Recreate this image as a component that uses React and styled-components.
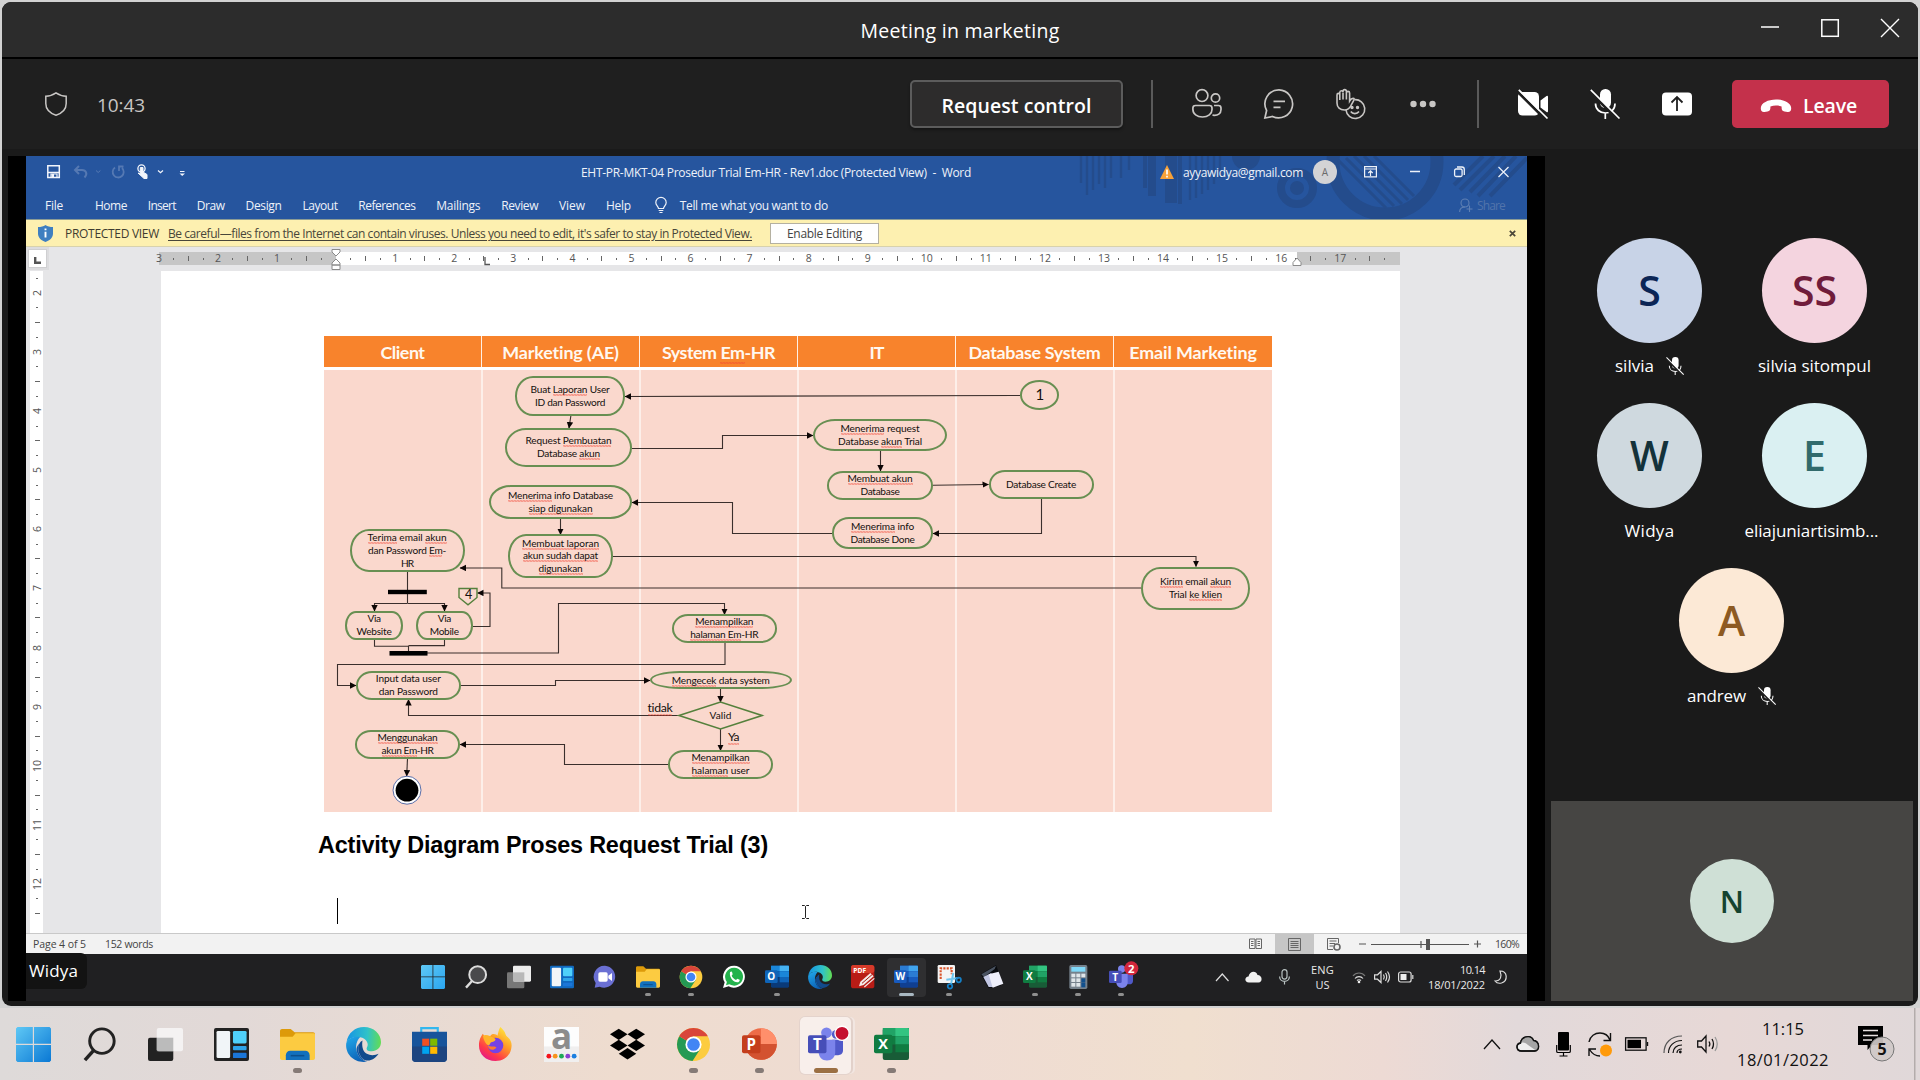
import React, { useLayoutEffect, useRef, useState } from "react";
import styled, { createGlobalStyle } from "styled-components";

const ui = `"Open Sans", "Noto Sans", sans-serif`;
const calibri = `Lato, "Open Sans", sans-serif`;

const GlobalStyle = createGlobalStyle`
  * { box-sizing: border-box; }
  body { margin: 0; background: #cfcfcf; font-family: ${ui}; overflow: hidden; }
  svg { display: block; flex: none; overflow: visible; }
`;

/* ---------- tracked text ---------- */

const FitBox = styled.span`
  display: inline-block;
  flex: none;
  white-space: pre;
  width: ${(p) => p.$w}px;
  text-decoration: inherit;
`;

function Fit({ w, children, className }) {
  const ref = useRef(null);
  const [gap, setGap] = useState(0);
  useLayoutEffect(() => {
    const el = ref.current;
    const n = el.textContent.length;
    setGap((w - el.getBoundingClientRect().width) / n);
  }, [w]);
  return (
    <FitBox $w={w} className={className}>
      <span ref={ref} style={{ letterSpacing: gap }}>
        {children}
      </span>
    </FitBox>
  );
}

/* ---------- page and Teams window ---------- */

const Desktop = styled.div`
  width: 1920px;
  height: 1080px;
  display: flex;
  flex-direction: column;
  padding-top: 2px;
  background: #d2d2d2;
`;

const TeamsWindow = styled.div`
  width: 1916px;
  height: 1004px;
  margin-left: 2px;
  flex: none;
  border-radius: 9px;
  overflow: hidden;
  background: #1a1a1a;
  display: flex;
  flex-direction: column;
`;

const TitleBar = styled.header`
  height: 57px;
  border-bottom: 2px solid #000;
  background: #2c2c2c;
  display: grid;
  grid-template-columns: 1fr 199px 1fr;
  color: #fff;
  font-size: 19.5px;
  line-height: 57px;
`;

const WindowControls = styled.div`
  grid-column: 3;
  display: flex;
  justify-content: flex-end;
  gap: 42px;
  padding: 17px 19px 0 0;
`;

const MeetingBar = styled.div`
  height: 90px;
  background: #1f1f1f;
  display: flex;
  align-items: center;
  padding: 0 29px 0 43px;
`;

const Clock = styled.div`
  margin-left: 30px;
  padding-top: 2px;
  color: #c8c6c4;
  font-size: 19px;
  flex: 1;
`;

const RequestButton = styled.button`
  width: 213px;
  height: 48px;
  border: 2px solid #5c5c5c;
  border-radius: 5px;
  background: #2d2c2c;
  color: #fff;
  font: 600 19.5px ${ui};
  padding: 3px 0 0;
  box-shadow: 0 2px 3px rgba(0, 0, 0, 0.35);
`;

const Divider = styled.div`
  width: 2px;
  height: 48px;
  background: #5a5a5a;
  margin: 0 ${(p) => p.$r}px 0 ${(p) => p.$l}px;
`;

const ToolIcons = styled.div`
  display: flex;
  align-items: center;
  gap: 42px;
`;

const LeaveButton = styled.button`
  width: 157px;
  height: 48px;
  margin-left: 40px;
  border: 0;
  border-radius: 5px;
  background: #c4314b;
  color: #fff;
  font: 600 19.5px ${ui};
  display: flex;
  align-items: center;
  padding: 3px 0 0 28px;
  gap: 11px;
`;

const Stage = styled.div`
  flex: 1;
  display: flex;
  padding: 7px 0 5px 6px;
`;

const ShareFrame = styled.div`
  width: 1537px;
  height: 845px;
  background: #000;
  padding: 0 18px;
  flex: none;
`;

/* ---------- Word ---------- */

const Word = styled.div`
  width: 1501px;
  height: 845px;
  display: flex;
  flex-direction: column;
  background: #e6e6e8;
  position: relative;
`;

const WordTop = styled.div`
  height: 63px;
  background: #26559e;
  color: #eef2f9;
  position: relative;
  overflow: hidden;
  font-size: 12px;
  flex: none;
`;

const Pattern = styled.svg`
  position: absolute;
  right: 0;
  top: 0;
`;

const WordCaption = styled.div`
  position: relative;
  height: 32px;
  display: flex;
  align-items: center;
  padding-left: 21px;
`;

const QuickAccess = styled.div`
  width: 534px;
  display: flex;
`;

const Account = styled.div`
  display: flex;
  align-items: center;
  margin-left: 189px;
  gap: 9px;
`;

const MiniAvatar = styled.div`
  width: 24px;
  height: 24px;
  border-radius: 50%;
  background: #d3d3d5;
  color: #6b6b6b;
  font-size: 10px;
  line-height: 24px;
  text-align: center;
  margin-left: 1px;
`;

const WordControls = styled.div`
  display: flex;
  align-items: center;
  margin-left: 27px;
  gap: 33.4px;
`;

const Tabs = styled.div`
  position: relative;
  height: 31px;
  display: flex;
  align-items: center;
  padding: 3px 0 0 19px;
  gap: 20.9px;
`;

const FirstTab = styled.span`
  margin-right: 11px;
`;

const TellMe = styled.span`
  display: flex;
  align-items: center;
  gap: 13px;
  margin-left: 3px;
`;

const ShareLink = styled.span`
  margin-left: auto;
  margin-right: 22px;
  display: flex;
  align-items: center;
  gap: 4px;
  color: #5274ab;
`;

const ProtectedBar = styled.div`
  height: 28px;
  flex: none;
  background: #fdf0b0;
  border-top: 1px solid #8c9c94;
  border-bottom: 1px solid #d8d2ad;
  display: flex;
  align-items: center;
  padding: 1px 11px 0 12px;
  font-size: 12px;
  color: #3f3c30;
`;

const Notice = styled.span`
  margin-left: 9px;
  text-decoration: underline;
  text-underline-offset: 2px;
  color: #48463a;
`;

const EnableButton = styled.button`
  margin-left: 18px;
  width: 109px;
  height: 21px;
  border: 1px solid #b4b0a0;
  background: #fefefe;
  color: #444;
  font: 12px ${ui};
  padding: 0;
`;

const CloseMark = styled.span`
  margin-left: auto;
  height: 8px;
`;

const RulerRow = styled.div`
  height: 24px;
  flex: none;
  display: flex;
  padding-left: 2px;
`;

const TabStop = styled.div`
  width: 19px;
  height: 19px;
  margin-top: 2px;
  background: #fff;
  border: 1px solid #cfcfd1;
  box-shadow: 0 0 0 2px #dcdcde;
  padding: 7px 0 0 5px;
`;

const Ruler = styled.div`
  position: relative;
  width: 1241px;
  height: 13px;
  margin: 5px 0 0 112px;
  display: flex;
  background: linear-gradient(90deg, #c6c6c6 177px, #fff 177px, #fff 1138px, #c6c6c6 1138px);
`;

const Marks = styled.div`
  display: flex;
  margin-left: -7.4px;
`;

const Mark = styled.span`
  width: 14.775px;
  height: 13px;
  flex: none;
  font-size: 10.5px;
  line-height: 13px;
  text-align: center;
  color: #555;
  white-space: nowrap;
  display: flex;
  justify-content: center;
  align-items: center;
`;

const Tick = styled.i`
  width: 1px;
  height: ${(p) => (p.$long ? 5 : 2)}px;
  background: #666;
`;

const Marker = styled.svg`
  position: absolute;
  left: ${(p) => p.$x}px;
  top: ${(p) => p.$y}px;
`;

const DocArea = styled.div`
  flex: 1;
  min-height: 0;
  display: flex;
`;

const SideRuler = styled.div`
  width: 13px;
  margin-left: 4px;
  padding-left: 1px;
  background: #fff;
`;

const SideMarks = styled.div`
  display: flex;
  flex-direction: column;
`;

const SideMark = styled.span`
  height: 14.775px;
  flex: none;
  display: flex;
  align-items: center;
  justify-content: center;
  font-size: 10.5px;
  color: #555;
`;

const Turned = styled.span`
  writing-mode: vertical-rl;
  transform: rotate(180deg);
  line-height: 12px;
`;

const SideTick = styled.i`
  height: 1px;
  width: ${(p) => (p.$long ? 5 : 2)}px;
  background: #666;
`;

const Page = styled.div`
  width: 1239px;
  margin-left: 118px;
  background: #fff;
  padding: 65px 0 0 157px;
  position: relative;
`;

const Heading = styled.h2`
  margin: 16px 0 0;
  font: 700 23.4px/35px "Liberation Sans", Arial, sans-serif;
  color: #000;
`;

const Caret = styled.div`
  width: 1px;
  height: 26px;
  margin: 35px 0 0 19px;
  background: #000;
`;

const Pointer = styled.svg`
  position: absolute;
  left: 640px;
  top: 634px;
`;

const StatusBar = styled.div`
  height: 21px;
  flex: none;
  background: #f2f2f2;
  border-top: 1px solid #c9c9c9;
  display: flex;
  align-items: center;
  padding: 0 8px 0 7px;
  font-size: 10.5px;
  color: #444;
`;

const WordCount = styled.span`
  margin-left: 19px;
`;

const ViewButtons = styled.div`
  margin-left: auto;
  display: flex;
  height: 20px;
`;

const ViewButton = styled.div`
  width: 39px;
  display: flex;
  align-items: center;
  justify-content: center;
  background: ${(p) => (p.$on ? "#c6c6c6" : "transparent")};
`;

const Zoom = styled.div`
  display: flex;
  align-items: center;
  margin-left: 6px;
  gap: 14px;
`;

/* ---------- swim-lane diagram ---------- */

const Lanes = styled.div`
  position: relative;
  width: 948px;
  height: 476px;
  margin-left: 6px;
  display: grid;
  grid-template-columns: 157px repeat(4, 158px) 159px;
  grid-template-rows: 31px 442px;
  row-gap: 3px;
  background: #fff;
`;

const LaneHead = styled.div`
  background: #f8832c;
  color: #fff8f0;
  font: 700 17.9px/32px ${calibri};
  text-align: center;
  border-left: ${(p) => (p.$first ? 0 : 1)}px solid #fff0e6;
`;

const LaneBody = styled.div`
  background: #fad8cd;
  border-left: ${(p) => (p.$first ? 0 : 2)}px solid #fdefe9;
`;

const Layer = styled.svg`
  position: absolute;
  left: 0;
  top: 0;
`;

const Node = styled.div`
  position: absolute;
  left: ${(p) => p.$x - 324}px;
  top: ${(p) => p.$y - 336}px;
  width: ${(p) => p.$w}px;
  height: ${(p) => p.$h}px;
  border: ${(p) => (p.$bare ? 0 : 2)}px solid #688f52;
  border-radius: ${(p) => p.$r}px / 50%;
  display: flex;
  flex-direction: column;
  align-items: center;
  justify-content: center;
  font: ${(p) => p.$size || 10.1}px/12.8px ${calibri};
  color: #14100e;
`;

const Flag = styled.span`
  padding-bottom: 1px;
  background: url("data:image/svg+xml,%3Csvg xmlns='http://www.w3.org/2000/svg' width='3' height='2'%3E%3Cpath d='M0 1.6L.75.4 2.25 1.6 3 .4' fill='none' stroke='%23f0402f' stroke-width='.7'/%3E%3C/svg%3E") repeat-x left bottom;
`;

const lanes = [
  ["Client", 44],
  ["Marketing (AE)", 117],
  ["System *Em*-HR", 113],
  ["IT", 14],
  ["Database System", 132],
  ["Email Marketing", 128],
];

const nodes = [
  { x: 515, y: 376, w: 110, h: 39.5, r: 18, t: [["Buat *Laporan* User", 79], ["ID dan Password", 70]] },
  { x: 505, y: 428, w: 127, h: 38.5, r: 21, t: [["Request *Pembuatan*", 86], ["Database *akun*", 63]] },
  { x: 489, y: 484.5, w: 143, h: 34.5, r: 22, t: [["*Menerima* info Database", 105], ["*siap digunakan*", 64]] },
  { x: 349.5, y: 529, w: 115, h: 43, r: 19, t: [["*Terima* email *akun*", 79], ["dan Password *Em*-", 78], ["HR", 12]] },
  { x: 508, y: 534, w: 105, h: 43.5, r: 18, t: [["*Membuat laporan*", 77], ["*akun sudah dapat*", 75], ["*digunakan*", 44]] },
  { x: 345, y: 611, w: 58, h: 28.5, r: 11, t: [["Via", 13], ["Website", 35]] },
  { x: 415.5, y: 611, w: 57.5, h: 28.5, r: 11, t: [["Via", 13], ["Mobile", 29]] },
  { x: 671.5, y: 614, w: 105.5, h: 28.5, r: 16, t: [["*Menampilkan*", 58], ["*halaman Em*-HR", 68]] },
  { x: 355.5, y: 671, w: 105.5, h: 28.5, r: 16, t: [["Input data user", 65], ["dan Password", 59]] },
  { x: 649.5, y: 671, w: 142.5, h: 18, r: 30, t: [["*Mengecek* data system", 98]] },
  { x: 668, y: 750, w: 105, h: 28.5, r: 16, t: [["*Menampilkan*", 58], ["*halaman* user", 58]] },
  { x: 355, y: 730, w: 105, h: 28.5, r: 16, t: [["*Menggunakan*", 60], ["*akun Em*-HR", 52]] },
  { x: 1020, y: 380, w: 39, h: 29.5, r: 19.5, size: 15, t: [["1", 8]] },
  { x: 813, y: 418.5, w: 134, h: 32, r: 22, t: [["*Menerima* request", 79], ["Database *akun* Trial", 84]] },
  { x: 827, y: 471, w: 106, h: 28.5, r: 16, t: [["*Membuat akun*", 65], ["Database", 39]] },
  { x: 988.5, y: 470, w: 105, h: 28.5, r: 16, t: [["Database Create", 70]] },
  { x: 832, y: 517, w: 101, h: 31.5, r: 17, t: [["*Menerima* info", 63], ["Database Done", 64]] },
  { x: 1141, y: 566.5, w: 109, h: 43, r: 19, t: [["*Kirim* email *akun*", 71], ["Trial *ke klien*", 53]] },
  { x: 700, y: 709, w: 41, h: 13, bare: true, t: [["Valid", 22]] },
  { x: 645, y: 701, w: 30, h: 15, bare: true, size: 12.3, t: [["*tidak*", 25]] },
  { x: 722, y: 730, w: 23, h: 15, bare: true, size: 12, t: [["*Ya*", 11]] },
  { x: 459, y: 588, w: 19, h: 15, bare: true, size: 12.5, t: [["4", 7]] },
];

const links = [
  "1020,395.5 625,396.5",
  "571,415 569,428",
  "632,448.5 722.5,448.5 722.5,435.5 813,435.5",
  "880.5,450 880.5,471",
  "933,485.3 988.5,484.5",
  "1041.5,498 1041.5,533.5 933,533.5",
  "832,533.5 732.5,533.5 732.5,502.5 632,502.5",
  "560.5,519 560.5,534.5",
  "613,556.5 1196,556.5 1196,566.5",
  "1141,588 501.8,588 501.8,568 460,568",
  "407.5,603.5 374.5,603.5 374.5,611",
  "407.5,603.5 444.5,603.5 444.5,611",
  "473,626.5 490,626.5 490,593 477.5,593",
  "427,653 558.5,653 558.5,603.5 724.5,603.5 724.5,614.5",
  "725,642.5 725,664.5 337.5,664.5 337.5,685.5 356,685.5",
  "461,685.5 555.5,685.5 555.5,680.5 650,680.5",
  "720.5,689 720.5,702",
  "678,715.5 408.5,715.5 408.5,699.5",
  "720.5,729 720.5,750.5",
  "668,764.5 564.5,764.5 564.5,744.5 460,744.5",
  "407.5,758.5 406.7,776",
];

function Flagged({ text }) {
  return text.split("*").map((part, i) => (i % 2 ? <Flag key={i}>{part}</Flag> : part));
}

function Diagram() {
  return (
    <Lanes>
      {lanes.map(([name, w], i) => (
        <LaneHead key={name} $first={i === 0}>
          <Fit w={w}>
            <Flagged text={name} />
          </Fit>
        </LaneHead>
      ))}
      {lanes.map(([name], i) => (
        <LaneBody key={name} $first={i === 0} />
      ))}
      <Layer width="948" height="476" viewBox="324 336 948 476" fill="none">
        <defs>
          <marker id="tip" markerWidth="7" markerHeight="7" refX="6" refY="3.2" orient="auto" markerUnits="userSpaceOnUse">
            <path d="M0 0L6.4 3.2L0 6.4z" fill="#0c0605" />
          </marker>
        </defs>
        {links.map((points) => (
          <polyline key={points} points={points} stroke="#3a2f2c" strokeWidth="1.1" markerEnd="url(#tip)" />
        ))}
        <path d="M407.5 572V603M374.5 639V646.3H408.5V652M444.5 639V645.6H408.5" stroke="#3a2f2c" strokeWidth="1.1" />
        <rect x="388" y="589.8" width="38.8" height="4.4" fill="#000" />
        <rect x="389.5" y="651" width="38" height="4.6" fill="#000" />
        <path d="M459 588.5H477V597.5L468 604.8L459 597.5Z" stroke="#55803c" strokeWidth="1.4" />
        <path d="M679 715.5L720.5 702L762 715.5L720.5 729Z" stroke="#55803c" strokeWidth="1.6" />
        <circle cx="407" cy="790.2" r="14" fill="#fff" stroke="#5a6ea8" strokeWidth="1" />
        <circle cx="407" cy="790.2" r="11.4" fill="#000" />
      </Layer>
      {nodes.map((n, i) => (
        <Node key={i} $x={n.x} $y={n.y} $w={n.w} $h={n.h} $r={n.r || 0} $bare={n.bare} $size={n.size}>
          {n.t.map(([text, w], j) => (
            <Fit key={j} w={w}>
              <Flagged text={text} />
            </Fit>
          ))}
        </Node>
      ))}
    </Lanes>
  );
}

/* ---------- shared screen task bar ---------- */

const InnerTaskbar = styled.div`
  height: 47px;
  flex: none;
  background: #202022;
  display: flex;
  position: relative;
  color: #e9e9e9;
`;

const NameTag = styled.div`
  position: absolute;
  left: 0;
  top: -1px;
  width: 61px;
  height: 36px;
  border-radius: 0 6px 6px 0;
  background: #131313;
  color: #fff;
  font-size: 17px;
  line-height: 36px;
  padding-left: 3px;
`;

const InnerApps = styled.div`
  display: flex;
  margin-left: 385px;
  width: 804px;
`;

const InnerApp = styled.div`
  width: 39px;
  height: 39px;
  margin: 4px 4.05px 0 0;
  flex: none;
  border-radius: 4px;
  background: ${(p) => (p.$state === "open" ? "#2f2f31" : "transparent")};
  display: flex;
  flex-direction: column;
  align-items: center;
  padding-top: 7px;
  gap: 4px;
`;

const Dot = styled.i`
  width: ${(p) => (p.$state === "open" ? 15 : 6)}px;
  height: 3px;
  border-radius: 2px;
  background: ${(p) => (p.$state === "open" ? "#a9b8c2" : p.$state ? "#8f8f8f" : "transparent")};
`;

const InnerTray = styled.div`
  display: flex;
  align-items: center;
  font-size: 11px;
  line-height: 15.4px;
  padding-bottom: 1px;
`;

const Stack = styled.div`
  display: flex;
  flex-direction: column;
  align-items: ${(p) => p.$align || "center"};
  margin: 0 ${(p) => p.$r || 0}px 0 ${(p) => p.$l || 0}px;
`;

const Space = styled.i`
  width: ${(p) => p.$w}px;
  flex: none;
`;

/* ---------- participants ---------- */

const Side = styled.aside`
  flex: 1;
  display: flex;
  flex-direction: column;
  padding: 82px 5px 0 6px;
`;

const People = styled.div`
  display: grid;
  grid-template-columns: 165px 165px;
  justify-content: start;
  padding-left: 16px;
  height: 563px;
  grid-auto-rows: 165px;
`;

const Person = styled.div`
  display: flex;
  flex-direction: column;
  align-items: center;
  ${(p) => p.$wide && "grid-column: 1 / 3; margin-right: 1px;"}
`;

const Avatar = styled.div`
  width: ${(p) => p.$d || 105}px;
  height: ${(p) => p.$d || 105}px;
  border-radius: 50%;
  background: ${(p) => p.$bg};
  color: ${(p) => p.$fg};
  font-size: ${(p) => p.$size || 41}px;
  font-weight: 600;
  display: flex;
  align-items: center;
  justify-content: center;
  padding-bottom: ${(p) => p.$lift ?? 2}px;
`;

const PersonName = styled.div`
  margin: 11px ${(p) => p.$shift || 0}px 0 0;
  height: 24px;
  display: flex;
  align-items: center;
  gap: 12px;
  color: #fff;
  font-size: 17px;
  line-height: 24px;
`;

const SelfView = styled.div`
  height: 200px;
  background: #464543;
  display: flex;
  align-items: center;
  justify-content: center;
`;

const people = [
  { id: "S", name: "silvia", w: 39, bg: "#c8d3e7", fg: "#0b2556", muted: true },
  { id: "SS", name: "silvia sitompul", w: 113, bg: "#f4d4df", fg: "#701c3b" },
  { id: "W", name: "Widya", w: 50, bg: "#cfd9df", fg: "#14323a" },
  { id: "E", name: "eliajuniartisimb...", w: 134, bg: "#daf0f2", fg: "#316a6c", shift: 6 },
  { id: "A", name: "andrew", w: 59, bg: "#fce9d6", fg: "#8d5a22", muted: true, wide: true },
];

/* ---------- outer task bar ---------- */

const Taskbar = styled.footer`
  flex: 1;
  margin-top: 2px;
  display: flex;
  background: linear-gradient(90deg, #dedad9 0%, #e2d9d7 12%, #eedccf 32%, #efdcd3 50%, #f0dfcf 62%, #eddad4 72%, #e2d9da 79%, #e7d8d6 90%, #e0d8d9 100%);
`;

const Apps = styled.div`
  display: flex;
  padding: 9px 0 0 8px;
  width: 1483px;
`;

const TaskButton = styled.div`
  width: 51px;
  height: 57px;
  margin-right: 15px;
  flex: none;
  border-radius: 5px;
  display: flex;
  flex-direction: column;
  align-items: center;
  padding-top: 10px;
  gap: 6px;
  background: ${(p) => (p.$state === "open" ? "#f8efeb" : "transparent")};
  box-shadow: ${(p) => (p.$state === "open" ? "2px 0 0 #e2d1ca, 4px 0 0 #f2e6e1, 0 0 0 1px #e4d3cc" : "none")};
`;

const AppDot = styled.i`
  width: ${(p) => (p.$state === "open" ? 24 : 9)}px;
  height: 5px;
  border-radius: 3px;
  background: ${(p) => (p.$state === "open" ? "#9b6f43" : p.$state ? "#857a76" : "transparent")};
`;

const Tray = styled.div`
  display: flex;
  align-items: center;
  height: 72px;
`;

const DateTime = styled.div`
  width: 92px;
  margin-left: 18px;
  display: flex;
  flex-direction: column;
  align-items: center;
  font-size: 16.5px;
  line-height: 31.5px;
  color: #111;
`;

/* ---------- icons ---------- */

const MicOff = ({ s = 30 }) => (
  <svg width={s} height={s} viewBox="0 0 30 30" fill="none" stroke="#fff" strokeWidth="1.7">
    <rect x="10" y="0" width="11" height="19" rx="5.3" fill="#fff" stroke="none" />
    <path d="M5.5 14.5C5.5 20.5 10 24 15.5 24S25 20.5 25 14.5M15.3 24V30" />
    <path d="M0 2.5L28 31" stroke="#1f1f1f" strokeWidth="3" />
    <path d="M.8 .8L29.5 29.5" />
  </svg>
);

const WinLogo = ({ s, a = "#5fc8f5", b = "#0a78d4" }) => (
  <svg width={s} height={s} viewBox="0 0 36 36">
    <defs>
      <linearGradient id={"wl" + s} x1="0" y1="0" x2="36" y2="36" gradientUnits="userSpaceOnUse">
        <stop stopColor={a} />
        <stop offset="1" stopColor={b} />
      </linearGradient>
    </defs>
    <path d="M1.5 0H17.3V17.3H0V1.5zM18.5 0H34.5L36 1.5V17.3H18.5zM0 18.5H17.3V36H1.5L0 34.5zM18.5 18.5H36V34.5L34.5 36H18.5z" fill={`url(#wl${s})`} />
  </svg>
);

const SearchIcon = ({ s, c, f }) => (
  <svg width={s} height={s} viewBox="0 0 36 36" fill="none" stroke={c}>
    <circle cx="20.5" cy="14.5" r="12.6" strokeWidth="3" fill={f} />
    <path d="M12 24L3 34" strokeWidth="3.6" />
  </svg>
);

const TaskView = ({ s, back, front }) => (
  <svg width={s} height={s} viewBox="0 0 36 36">
    <rect x="0" y="11" width="26" height="24" rx="2" fill={back} />
    <rect x="9" y="1" width="27" height="24" rx="2" fill={front} />
    <path d="M9 11H26V25H9z" fill="#9d9d9d" opacity=".65" />
  </svg>
);

const Widgets = ({ s, edge }) => (
  <svg width={s} height={s} viewBox="0 0 36 36">
    <rect y="1" width="36" height="34" rx="2" fill={edge} />
    <rect x="2.6" y="4" width="14" height="28" rx="1.5" fill="#f1f5f8" />
    <rect x="19.5" y="4" width="14" height="13" rx="1.5" fill="#4fd0fa" />
    <rect x="19.5" y="19.5" width="14" height="4.5" rx="1" fill="#2ea4ea" />
    <rect x="19.5" y="26.5" width="14" height="5.5" rx="1" fill="#1b76d8" />
  </svg>
);

const Folder = ({ s }) => (
  <svg width={s} height={s} viewBox="0 0 36 36">
    <path d="M0 4C0 3 1 2 2 2H11L15 5.5H34C35.2 5.5 36 6.4 36 7.5V12H0z" fill="#dd9a0a" />
    <path d="M0 10H13L16 6.5H34.5C35.4 6.5 36 7 36 8V32C36 33.2 35.2 34 34 34H2C.8 34 0 33.2 0 32z" fill="#fccb41" />
    <path d="M6 34V29C6 26.5 8 24.5 10.5 24.5H26C28.5 24.5 30.5 26.5 30.5 29V34z" fill="#1270bd" />
    <path d="M11 29.5H25" stroke="#0b4f8d" strokeWidth="1.6" />
  </svg>
);

const Edge = ({ s }) => (
  <svg width={s} height={s} viewBox="0 0 36 36">
    <defs>
      <linearGradient id={"ea" + s} x1="4" y1="10" x2="36" y2="12" gradientUnits="userSpaceOnUse">
        <stop stopColor="#1a9be0" />
        <stop offset=".55" stopColor="#2fc2c9" />
        <stop offset="1" stopColor="#62dc55" />
      </linearGradient>
      <linearGradient id={"eb" + s} x1="2" y1="12" x2="14" y2="36" gradientUnits="userSpaceOnUse">
        <stop stopColor="#1fa3e6" />
        <stop offset="1" stopColor="#0c5fb4" />
      </linearGradient>
    </defs>
    <path d="M0.5 16C2 6 9.5 0 18.5 0C28.5 0 36 7 36 15.5C36 21.5 31.5 25 26.5 25C22 25 20.5 23 21.5 21C24 17.5 21 11.5 14.5 10.5C8 9.5 2.5 12 .5 16z" fill={`url(#ea${s})`} />
    <path d="M.2 17C1.5 11.5 9 9 14.5 10.5C11 14 9.5 19 11 25C12.5 31 17 35.5 22 35.6C10 38 -1 29 .2 17z" fill={`url(#eb${s})`} />
    <path d="M17 14C11 17 11.5 26 16 31.5C21 37 29 34.5 33.5 27.5C29 29.8 20 30 17.5 23C16.5 20 16.5 16.5 17 14z" fill="#114a8c" />
    <path d="M11 25C12.5 31 17 35.5 22 35.6C20 35 17.5 33.5 16 31.5C12.5 27 11.5 21 14 17C11.5 19 10.3 22 11 25z" fill="#0f58a6" />
  </svg>
);

const Chrome = ({ s }) => (
  <svg width={s} height={s} viewBox="0 0 36 36">
    <circle cx="18" cy="18" r="17" fill="#fccc3f" />
    <path d="M18 18L3.3 9.5A17 17 0 0 0 17 35L25.3 22z" fill="#249a54" />
    <path d="M3.3 9.5A17 17 0 0 1 32.7 9.5H18L10.5 14z" fill="#d9453a" />
    <circle cx="18" cy="18" r="8.3" fill="#fff" />
    <circle cx="18" cy="18" r="6.5" fill="#4285f4" />
  </svg>
);

const Letter = styled.text`
  font: 700 ${(p) => p.$size}px ${ui};
  fill: ${(p) => p.$fill || "#fff"};
  text-anchor: middle;
`;

const Office = ({ s, kind }) => {
  const c = {
    X: ["#185c37", "#107c41", "#21a366", "#33c481"],
    W: ["#103f91", "#185abd", "#2b7cd3", "#41a5ee"],
    O: ["#0a3a78", "#0f64b8", "#1a86d9", "#45b2f2"],
  }[kind];
  return (
    <svg width={s} height={s} viewBox="0 0 36 36">
      <rect x="9" y="1" width="27" height="33" rx="2" fill={c[0]} />
      <path d="M9 1H36V9.5H9z" fill={c[2]} />
      <path d="M22 1H34Q36 1 36 3V9.5H22z" fill={c[3]} />
      <path d="M9 9.5H36V18H9z" fill={c[1]} />
      <path d="M22 9.5H36V18H22z" fill={c[2]} />
      <path d="M22 18H36V26H22z" fill={c[1]} />
      <rect y="8" width="19" height="19" rx="2" fill={kind === "X" ? "#107c41" : c[1]} />
      <Letter x="9.5" y="23" $size="15">
        {kind}
      </Letter>
    </svg>
  );
};

const PowerPoint = ({ s }) => (
  <svg width={s} height={s} viewBox="0 0 36 36">
    <circle cx="19.5" cy="17.5" r="16.3" fill="#ed6c47" />
    <path d="M19.5 1.2A16.3 16.3 0 0 1 35.8 17.5H19.5z" fill="#ff8f6b" />
    <path d="M3.2 17.5A16.3 16.3 0 0 0 35.8 17.5z" fill="#d35230" />
    <rect y="8.5" width="19" height="18.5" rx="2" fill="#c43e1c" />
    <Letter x="9.5" y="23.3" $size="15.5">
      P
    </Letter>
  </svg>
);

const Teams = ({ s, badge }) => (
  <svg width={s} height={s} viewBox="0 0 36 36">
    <circle cx="29" cy="7.5" r="4.5" fill="#5059c9" />
    <path d="M25 13H36V24C36 27.5 33.5 29 31 29H25z" fill="#5059c9" />
    <circle cx="19" cy="6" r="5.5" fill="#7b83eb" />
    <path d="M11 13H28V26C28 31 24.5 34.5 19.5 34.5S11 31 11 26z" fill="#7b83eb" />
    <rect y="8.5" width="19" height="18.5" rx="2" fill="#464eb8" />
    <Letter x="9.5" y="23.3" $size="15.5">
      T
    </Letter>
    {badge ? (
      <>
        <circle cx="33.5" cy="5" r="10.5" fill="#d3263c" />
        <Letter x="33.5" y="11.3" $size="17">
          {badge}
        </Letter>
      </>
    ) : (
      <circle cx="35" cy="6.5" r="7.3" fill="#c50f2e" stroke="#fff" strokeWidth="1.4" />
    )}
  </svg>
);

const Chat = ({ s }) => (
  <svg width={s} height={s} viewBox="0 0 36 36">
    <path d="M18 1A16.5 16.5 0 1 1 10 32.5L2.5 34L4 27A16.5 16.5 0 0 1 18 1z" fill="#6a6fd3" />
    <rect x="8" y="11" width="14" height="14" rx="2.5" fill="#fff" />
    <path d="M23 16L28.5 12V24L23 20z" fill="#fff" />
  </svg>
);

const WhatsApp = ({ s }) => (
  <svg width={s} height={s} viewBox="0 0 36 36">
    <path d="M18.5 1A16.5 16.5 0 1 1 10 32L1.5 34.5L4 26A16.5 16.5 0 0 1 18.5 1z" fill="#fff" />
    <path d="M18.5 4A13.5 13.5 0 1 1 11 29L6 30.4L7.3 25.4A13.5 13.5 0 0 1 18.5 4z" fill="#23b24c" />
    <path d="M12 11C14 9 15 10 15.5 12L16 14L14.5 16C16 19 18 21 21 22.5L23 20.5L26.5 22C27 24 25 26 23 26C17 26 10.5 18.5 12 11z" fill="#fff" />
  </svg>
);

const PdfPen = ({ s }) => (
  <svg width={s} height={s} viewBox="0 0 36 36">
    <rect width="35" height="35" rx="4" fill="#b81c16" />
    <rect width="35" height="12" rx="4" fill="#d63a2a" />
    <Letter x="13" y="11.5" $size="10">
      PDF
    </Letter>
    <path d="M12 32L14 25L29 12L34 17L19 30z" fill="#f3e9e7" />
    <path d="M16 27L31 14.5M20 33L35 20" stroke="#f3e9e7" strokeWidth="1.8" />
    <path d="M16.5 27.5L31.5 14.5" stroke="#a01a14" strokeWidth="1.5" />
  </svg>
);

const Snip = ({ s }) => (
  <svg width={s} height={s} viewBox="0 0 36 36" fill="none">
    <rect x="1" y="0" width="26" height="27" rx="2" fill="#f4f4f4" />
    <path d="M5.5 21V5H22V14" stroke="#d9542b" strokeWidth="3.2" strokeDasharray="3.2 1.8" />
    <path d="M14 22L32 19.5M21 29L24.5 12" stroke="#6ec6ef" strokeWidth="3" />
    <circle cx="32.5" cy="22.5" r="3.4" stroke="#1580c7" strokeWidth="2.6" />
    <circle cx="19.5" cy="32" r="3.4" stroke="#1580c7" strokeWidth="2.6" />
  </svg>
);

const Papers = ({ s }) => (
  <svg width={s} height={s} viewBox="0 0 36 36">
    <path d="M1 14L24 0L29 13L31 31L13 35z" fill="#090b0f" />
    <path d="M2 14L24 1L22 6L6 18z" fill="#4a5361" />
    <path d="M5 18L17 12L20 33L13 33z" fill="#c3c8e4" />
    <path d="M13 14L28 10L35 28L19 34z" fill="#eff0fb" />
  </svg>
);

const Calc = ({ s }) => (
  <svg width={s} height={s} viewBox="0 0 36 36">
    <rect x="5" y="0" width="27" height="36" rx="2.5" fill="#75818c" />
    <rect x="8" y="3" width="21" height="7" fill="#7fd8f8" />
    {[13, 20, 27].map((y) =>
      [8, 15.5, 23].map((x) => (
        <rect key={x + "-" + y} x={x} y={y} width="6" height={x > 20 && y > 15 ? 6.5 : 5.5} fill={x > 20 && y > 15 ? "#12508d" : "#dfe5e9"} />
      ))
    )}
  </svg>
);

const Store = ({ s }) => (
  <svg width={s} height={s} viewBox="0 0 36 36">
    <path d="M9.5 6V1.2H26.5V6" fill="none" stroke="#32b7ee" strokeWidth="2.2" />
    <path d="M0 5H36V32Q36 36 32 36H4Q0 36 0 32z" fill="#17549b" />
    <path d="M0 20H36V32Q36 36 32 36H4Q0 36 0 32z" fill="#1d4580" />
    <path d="M10.5 12H17.7V19.3H10.5z" fill="#f25022" />
    <path d="M18.7 12H26V19.3H18.7z" fill="#7fba00" />
    <path d="M10.5 20.3H17.7V27.6H10.5z" fill="#00a4ef" />
    <path d="M18.7 20.3H26V27.6H18.7z" fill="#ffb900" />
  </svg>
);

const Firefox = ({ s }) => (
  <svg width={s} height={s} viewBox="0 0 36 36">
    <defs>
      <linearGradient id="ff" x1="30" y1="2" x2="8" y2="34" gradientUnits="userSpaceOnUse">
        <stop stopColor="#ffec40" />
        <stop offset=".4" stopColor="#ff9a27" />
        <stop offset=".75" stopColor="#ff3b47" />
        <stop offset="1" stopColor="#e3168b" />
      </linearGradient>
    </defs>
    <path d="M23 0C27 3.5 28 6 29 9C33 12 35 16 34.5 20C34 29 27 35 18 35C8 35 1 28 1 19C1 13 3 10 5 7L7 10C9 9 11 9 12.5 9.5C14 6 19 7 20 9C21 5 21.5 2 23 0z" fill="url(#ff)" />
    <circle cx="18" cy="19" r="8" fill="#7542e5" />
    <path d="M5 9C9 7 12 9.5 17 11.5C19 12.5 18 14.5 14.5 15.5C12 16 13 18 11 19C7 17 6 13 5 9z" fill="#ffb52b" />
    <path d="M10 19C13 21 17 19 19 21C16 25 11 24 10 19z" fill="#ff7a2d" />
  </svg>
);

const LetterA = ({ s }) => (
  <svg width={s} height={s} viewBox="0 0 36 36">
    <rect width="36" height="36" fill="#f0efef" />
    <rect width="36" height="20" fill="#fdfdfd" />
    <Letter x="18" y="23" $size="36" $fill="#8c8c8c">
      a
    </Letter>
    {["#f5141c", "#f7931e", "#1fa857", "#8a3fd1", "#1a7fe0"].map((c, i) => (
      <circle key={c} cx={5 + i * 6.5} cy="30" r="2.5" fill={c} />
    ))}
  </svg>
);

const Dropbox = ({ s }) => (
  <svg width={s} height={s} viewBox="0 0 36 36">
    {[[9, 7.5], [27, 7.5], [9, 19], [27, 19], [18, 27.5]].map(([x, y]) => (
      <path key={x + "-" + y} d={`M${x - 9} ${y}L${x} ${y - 5.8}L${x + 9} ${y}L${x} ${y + 5.8}Z`} fill="#000" />
    ))}
  </svg>
);

const innerApps = [
  [<WinLogo s={24} b="#2aa5f0" />],
  [<SearchIcon s={24} c="#dcdcdc" f="#4a4a4c" />],
  [<TaskView s={24} back="#777" front="#ececec" />],
  [<Widgets s={24} edge="#1069c0" />],
  [<Chat s={24} />],
  [<Folder s={24} />, "run"],
  [<Chrome s={24} />, "run"],
  [<WhatsApp s={24} />],
  [<Office s={24} kind="O" />, "run"],
  [<Edge s={24} />],
  [<PdfPen s={24} />],
  [<Office s={24} kind="W" />, "open"],
  [<Snip s={24} />, "run"],
  [<Papers s={24} />],
  [<Office s={24} kind="X" />, "run"],
  [<Calc s={24} />, "run"],
  [<Teams s={24} badge="2" />, "run"],
];

const apps = [
  [<WinLogo s={35} />],
  [<SearchIcon s={35} c="#222" f="none" />],
  [<TaskView s={35} back="#222" front="#f4f2f2" />],
  [<Widgets s={35} edge="#222" />],
  [<Folder s={35} />, "run"],
  [<Edge s={35} />],
  [<Store s={35} />],
  [<Firefox s={35} />],
  [<LetterA s={35} />],
  [<Dropbox s={35} />],
  [<Chrome s={35} />, "run"],
  [<PowerPoint s={35} />, "run"],
  [<Teams s={35} />, "open"],
  [<Office s={35} kind="X" />, "run"],
];

/* ---------- sections ---------- */

function MeetingHeader() {
  return (
    <>
      <TitleBar>
        <span />
        <Fit w={199}>Meeting in marketing</Fit>
        <WindowControls>
          <svg width="18" height="18" stroke="#fff" strokeWidth="1.5">
            <path d="M0 8H18" />
          </svg>
          <svg width="18" height="18" stroke="#fff" strokeWidth="1.5" fill="none">
            <rect x=".8" y=".8" width="16.5" height="16.5" />
          </svg>
          <svg width="18" height="18" stroke="#fff" strokeWidth="1.4">
            <path d="M0 0L18 18M18 0L0 18" />
          </svg>
        </WindowControls>
      </TitleBar>
      <MeetingBar>
        <svg width="22" height="24" viewBox="0 0 22 24" fill="none" stroke="#c8c6c4" strokeWidth="1.5">
          <path d="M11 .9C14 3 17.5 4.2 21.2 4.2V11.5C21.2 17.3 16.8 21.3 11 23.2C5.2 21.3 .8 17.3 .8 11.5V4.2C4.5 4.2 8 3 11 .9z" />
        </svg>
        <Clock>
          <Fit w={48}>10:43</Fit>
        </Clock>
        <RequestButton>
          <Fit w={150}>Request control</Fit>
        </RequestButton>
        <Divider $l={28} $r={39} />
        <ToolIcons>
          <svg width="30" height="30" fill="none" stroke="#c8c6c4" strokeWidth="1.7">
            <circle cx="10" cy="6.6" r="5.9" />
            <circle cx="23.5" cy="9" r="4.2" />
            <path d="M3.5 16.5H17.5C19 16.5 20 17.5 20 19V20.5C20 25 16 28 10.5 28S.9 25 .9 20.5V19C.9 17.5 2 16.5 3.5 16.5z" />
            <path d="M22 16.5H26.5C28 16.5 29 17.5 29 19V20.5C29 24.5 26 27 20.5 26.2" />
          </svg>
          <svg width="30" height="30" fill="none" stroke="#c8c6c4" strokeWidth="1.7">
            <path d="M15 .9A14 14 0 1 1 8.5 27.5L.9 29L2.6 21.5A14 14 0 0 1 15 .9z" />
            <path d="M9.5 12.3H21M9.5 18.3H16.5" />
          </svg>
          <svg width="30" height="30" fill="none" stroke="#c8c6c4" strokeWidth="1.6">
            <path d="M1 14V6C1 3.8 3.8 3.8 3.8 6V3.5C3.8 1.2 7 1.2 7 3.5V2.5C7 0 10.4 0 10.4 2.5V4C10.4 1.8 13.6 1.8 13.6 4V12C14.5 10.5 16.5 9 18 9.5C19 10 16.5 13.5 15 16.5C13.5 19.5 11.5 21 8.5 21C4 21 1 18.5 1 14z" />
            <path d="M3.8 6V11M7 4V10.5M10.4 4V10.5" />
            <path d="M18.5 10.7A9.4 9.4 0 1 1 10 21" />
            <path d="M14.8 22.5C16.5 25.3 21 25.3 23 22.5" />
            <circle cx="16" cy="18.5" r=".9" fill="#c8c6c4" />
            <circle cx="21.5" cy="18.5" r=".9" fill="#c8c6c4" />
          </svg>
          <svg width="30" height="30" fill="#c8c6c4">
            <circle cx="5.5" cy="15" r="3.2" />
            <circle cx="15" cy="15" r="3.2" />
            <circle cx="24.5" cy="15" r="3.2" />
          </svg>
        </ToolIcons>
        <Divider $l={39} $r={39} />
        <ToolIcons>
          <svg width="30" height="30" fill="#fff">
            <rect x="0" y="3" width="21" height="23.5" rx="4.5" />
            <path d="M22.5 11.5L28.5 7Q30 6 30 8V22Q30 24 28.5 23L22.5 18.5z" />
            <path d="M-.5 2.5L28.5 31.5" stroke="#1f1f1f" strokeWidth="2.8" />
            <path d="M.8 .8L29.5 29.5" stroke="#fff" strokeWidth="1.7" />
          </svg>
          <MicOff />
          <svg width="30" height="30">
            <rect y="3.5" width="30" height="23" rx="4" fill="#fff" />
            <path d="M15 22V8.5M9.5 13.5L15 8L20.5 13.5" stroke="#1f1f1f" strokeWidth="1.8" fill="none" />
          </svg>
        </ToolIcons>
        <LeaveButton>
          <svg width="32" height="14" viewBox="0 0 32 14">
            <path d="M16 .5C24 .5 31 4 31.2 9C31.3 12 30 13.3 27.5 13L24.5 12.5C22 12 21.5 10.5 21.6 7.5C18 6.2 14 6.2 10.4 7.5C10.5 10.5 10 12 7.5 12.5L4.5 13C2 13.3 .7 12 .8 9C1 4 8 .5 16 .5z" fill="#fff" />
          </svg>
          <Fit w={54}>Leave</Fit>
        </LeaveButton>
      </MeetingBar>
    </>
  );
}

const tabs = [["Home", 32], ["Insert", 28], ["Draw", 28], ["Design", 36], ["Layout", 35], ["References", 57], ["Mailings", 44], ["Review", 37], ["View", 26], ["Help", 25]];

function WordHeader() {
  return (
    <>
      <WordTop>
        <Pattern width="460" height="63" viewBox="1067 156 460 63" fill="none" stroke="#244c8c">
          <g strokeWidth="2.5">
            <path d="M1081 156V183M1087 156V195M1093 156V190M1099 156V184M1105 156V188M1111 156V178" />
            <path d="M1190 156V200M1196 156V198M1202 156V194M1208 156V190M1214 156V184M1220 156V178" />
            <path d="M1121 156V178M1129 156V170" />
            <path d="M1145 156V188M1180 156V204" strokeWidth="4" />
            <path d="M1171 156V203" strokeWidth="12" />
            <path d="M1152 156V196" strokeWidth="8" />
          </g>
          <circle cx="1297" cy="188" r="16" strokeWidth="8" />
          <circle cx="1297" cy="188" r="7" fill="#244c8c" stroke="none" />
          <path d="M1232 156A14 14 0 0 0 1260 156z" fill="#244c8c" stroke="none" />
          <circle cx="1385" cy="162" r="52" strokeWidth="13" />
          <path d="M1338 160L1386 208M1346 158L1394 206M1354 156L1402 204M1364 156L1408 200M1374 156L1414 196" strokeWidth="3" />
          <path d="M1483 156L1454 185M1494 156L1460 190M1505 156L1470 192M1516 156L1478 196M1527 158L1490 196" strokeWidth="4" />
        </Pattern>
        <WordCaption>
          <QuickAccess>
            <svg width="150" height="18" viewBox="47 163 150 18" fill="none" stroke="#f2f5fb" strokeWidth="1.5">
              <path d="M47.8 165.8H59.3V177.5H47.8zM48 172.5H59" />
              <path d="M51 177.5V174H57V177.5" strokeWidth="1.2" />
              <path d="M51.5 174H54V178H51.5z" fill="#f2f5fb" stroke="none" />
              <g stroke="#5579b3">
                <path d="M79 166L75 170L79 174M75.5 170H82C86 170 88 174 84.5 177.5" strokeWidth="2" />
                <path d="M96 170.5L98.2 172.5L100.4 170.5" strokeWidth="1" />
                <path d="M115 167.5A5.5 5.5 0 1 0 122 168M123.5 166.5H119V171" strokeWidth="1.8" />
              </g>
              <circle cx="141.5" cy="168.5" r="3.6" strokeWidth="1.3" />
              <path d="M140.3 167.5V174L138 173L144 178.5H147V174.5L143 172V167.5z" fill="#f2f5fb" strokeWidth="1" />
              <path d="M158 170.5L160.5 172.8L163 170.5" strokeWidth="1.2" />
              <path d="M180 171.5H184.5" strokeWidth="1" />
              <path d="M179.5 173.5H185L182.2 176z" fill="#f2f5fb" stroke="none" />
            </svg>
          </QuickAccess>
          <Fit w={390}>{"EHT-PR-MKT-04 Prosedur Trial Em-HR - Rev1.doc (Protected View)  -  Word"}</Fit>
          <Account>
            <svg width="14" height="14" viewBox="0 0 14 14">
              <path d="M7 0L14 14H0z" fill="#f5a13a" />
              <path d="M7 4.5V9.5M7 10.8V12.5" stroke="#fff" strokeWidth="1.7" />
            </svg>
            <Fit w={120}>ayyawidya@gmail.com</Fit>
            <MiniAvatar>A</MiniAvatar>
          </Account>
          <WordControls>
            <svg width="13" height="12" fill="none" stroke="#eef2f9" strokeWidth="1.2">
              <path d="M.6 .6H12.4V10.8H.6zM.6 3H12.4M6.5 10V5M4.3 7L6.5 4.8L8.7 7" />
            </svg>
            <svg width="10" height="12" stroke="#eef2f9" strokeWidth="1.3">
              <path d="M0 5.5H10" />
            </svg>
            <svg width="11" height="12" fill="none" stroke="#eef2f9" strokeWidth="1.3">
              <rect x=".6" y="3" width="7.5" height="7.5" rx="1.5" />
              <path d="M3 1H8Q10.3 1 10.3 3.5V9" />
            </svg>
            <svg width="11" height="12" stroke="#eef2f9" strokeWidth="1.2">
              <path d="M.5 1L10.5 11M10.5 1L.5 11" />
            </svg>
          </WordControls>
        </WordCaption>
        <Tabs>
          <FirstTab>
            <Fit w={18}>File</Fit>
          </FirstTab>
          {tabs.map(([name, w]) => (
            <Fit key={name} w={w}>
              {name}
            </Fit>
          ))}
          <TellMe>
            <svg width="12" height="17" viewBox="0 0 12 17" fill="none" stroke="#eef2f9" strokeWidth="1.2">
              <path d="M3.5 11.5C3.5 9.5 .8 8.5 .8 5.5A5.2 5.2 0 0 1 11.2 5.5C11.2 8.5 8.5 9.5 8.5 11.5zM3.7 13.5H8.3M4.5 15.5H7.5" />
            </svg>
            <Fit w={148}>Tell me what you want to do</Fit>
          </TellMe>
          <ShareLink>
            <svg width="14" height="15" fill="none" stroke="#5f80b4" strokeWidth="1.1">
              <circle cx="6" cy="5" r="4" />
              <path d="M.6 14C.6 10.5 3 9 6 9M10.5 7.5V14M7.5 11H13.5" />
            </svg>
            <Fit w={28}>Share</Fit>
          </ShareLink>
        </Tabs>
      </WordTop>
      <ProtectedBar>
        <svg width="15" height="17" viewBox="0 0 15 17">
          <path d="M7.5 0C9.5 1.5 12 2 15 2V8.5C15 12.5 12 15.5 7.5 17C3 15.5 0 12.5 0 8.5V2C3 2 5.5 1.5 7.5 0z" fill="#3f7fc0" />
          <path d="M7.5 3.5V5.3M7.5 6.8V12.5" stroke="#fff" strokeWidth="1.9" />
        </svg>
        <Space $w={12} />
        <Fit w={94}>PROTECTED VIEW</Fit>
        <Notice>
          <Fit w={584}>Be careful—files from the Internet can contain viruses. Unless you need to edit, it's safer to stay in Protected View.</Fit>
        </Notice>
        <EnableButton>
          <Fit w={75}>Enable Editing</Fit>
        </EnableButton>
        <CloseMark>
          <svg width="7" height="7" stroke="#4a4738" strokeWidth="1.7">
            <path d="M.8 .8L6.2 6.2M6.2 .8L.8 6.2" />
          </svg>
        </CloseMark>
      </ProtectedBar>
    </>
  );
}

const rulerSteps = Array.from({ length: 84 }, (_, i) => i - 12);
const sideSteps = Array.from({ length: 44 }, (_, i) => i + 7);

function WordDocument() {
  return (
    <>
      <RulerRow>
        <TabStop>
          <svg width="7" height="7">
            <path d="M1.2 0V5.8H7" stroke="#555" strokeWidth="2.4" fill="none" />
          </svg>
        </TabStop>
        <Ruler>
          <Marks>
            {rulerSteps.map((q) => (
              <Mark key={q}>{q === 0 ? null : q % 4 === 0 ? Math.abs(q / 4) : <Tick $long={q % 2 === 0} />}</Mark>
            ))}
          </Marks>
          <Marker $x={172} $y={-3} width="10" height="22" fill="#fff" stroke="#8a8a8a">
            <path d="M1 .5H9V3L5 7L1 3zM5 10L9 14V16H1V14zM1 16H9V20.5H1z" />
          </Marker>
          <Marker $x={1133} $y={5} width="10" height="10" fill="#fff" stroke="#8a8a8a">
            <path d="M5 1L9 5.5V8.5H1V5.5z" />
          </Marker>
          <Marker $x={325} $y={5} width="6" height="10" fill="none" stroke="#555" strokeWidth="1.3">
            <path d="M1 0V7.5H6" />
          </Marker>
        </Ruler>
      </RulerRow>
      <DocArea>
        <SideRuler>
          <SideMarks>
            {sideSteps.map((q) => (
              <SideMark key={q}>{q % 4 === 0 ? <Turned>{q / 4}</Turned> : <SideTick $long={q % 2 === 0} />}</SideMark>
            ))}
          </SideMarks>
        </SideRuler>
        <Page>
          <Diagram />
          <Heading>
            <Fit w={450}>Activity Diagram Proses Request Trial (3)</Fit>
          </Heading>
          <Caret />
          <Pointer width="8" height="14" fill="none" stroke="#222" strokeWidth="1">
            <path d="M1 .5H3.5L4.5 1.5L5.5 .5H8M4.5 1.5V12.5M1 13.5H3.5L4.5 12.5L5.5 13.5H8" />
          </Pointer>
        </Page>
      </DocArea>
      <StatusBar>
        <Fit w={53}>Page 4 of 5</Fit>
        <WordCount>
          <Fit w={48}>152 words</Fit>
        </WordCount>
        <ViewButtons>
          <ViewButton>
            <svg width="13" height="12" fill="none" stroke="#666">
              <path d="M.5 1H6V10.5H.5zM7 1H12.5V10.5H7zM2 3.5H4.5M2 5.5H4.5M2 7.5H4.5M8.5 3.5H11M8.5 5.5H11M8.5 7.5H11" />
            </svg>
          </ViewButton>
          <ViewButton $on>
            <svg width="13" height="13" fill="none" stroke="#666">
              <path d="M.5 .5H12.5V12.5H.5zM2.5 3.5H10.5M2.5 5.5H10.5M2.5 7.5H10.5M2.5 9.5H10.5" />
            </svg>
          </ViewButton>
          <ViewButton>
            <svg width="14" height="13" fill="none" stroke="#666">
              <path d="M6 11.5H.5V.5H11.5V5M2.5 3H9.5M2.5 5.5H8M2.5 8H6" />
              <circle cx="10" cy="9" r="3" strokeWidth="1.6" />
            </svg>
          </ViewButton>
        </ViewButtons>
        <Zoom>
          <svg width="122" height="14" stroke="#555" strokeWidth="1.2">
            <path d="M0 7H7M115 7H122M118.5 3.5V10.5M12 7.5H110M62 4V11" />
            <rect x="67" y="2" width="4" height="11" fill="#555" stroke="none" />
          </svg>
          <Fit w={24}>160%</Fit>
        </Zoom>
      </StatusBar>
    </>
  );
}

function SharedTaskbar() {
  return (
    <InnerTaskbar>
      <InnerApps>
        <Space $w={2} />
        {innerApps.map(([icon, state], i) => (
          <InnerApp key={i} $state={state}>
            {icon}
            <Dot $state={state} />
          </InnerApp>
        ))}
      </InnerApps>
      <InnerTray>
        <svg width="14" height="10" fill="none" stroke="#ddd" strokeWidth="1.2">
          <path d="M1 9L7.3 2L13.5 9" />
        </svg>
        <Space $w={16} />
        <svg width="17" height="12" viewBox="0 0 17 12">
          <path d="M4 11.5C-1 11.5 -.5 5.5 3.5 5.5C4.5 0 11 -1 12.5 4C17.5 4 18 11.5 13.5 11.5z" fill="#f1f1f1" />
        </svg>
        <Space $w={17} />
        <svg width="11" height="16" fill="none" stroke="#b9c3c3" strokeWidth="1.2">
          <rect x="3" y=".6" width="5" height="9.5" rx="2.5" />
          <path d="M.6 7.5C.6 14 10.4 14 10.4 7.5M5.5 12.5V15.5" />
        </svg>
        <Stack $l={21} $r={18}>
          <Fit w={23}>ENG</Fit>
          <Fit w={14}>US</Fit>
        </Stack>
        <svg width="14" height="13" fill="none" strokeWidth="1.2">
          <path d="M1 5C4 1 10 1 13 5" stroke="#777" />
          <path d="M3 7.5C5 5 9 5 11 7.5M5 9.5C6 8.5 8 8.5 9 9.5" stroke="#ddd" />
          <circle cx="7" cy="11" r="1.3" fill="#eee" />
        </svg>
        <Space $w={8} />
        <svg width="17" height="14" fill="none" stroke="#ddd" strokeWidth="1.2">
          <path d="M.6 4.8H3.5L7 1.5V12.5L3.5 9.2H.6zM9.5 4.5Q11 7 9.5 9.5M11.5 3Q14 7 11.5 11M13.5 1.5Q17.5 7 13.5 12.5" />
        </svg>
        <Space $w={7} />
        <svg width="16" height="12" fill="none" stroke="#ddd" strokeWidth="1.2">
          <rect x=".6" y="1" width="12.5" height="10" rx="2" />
          <path d="M14.8 4V8" />
          <rect x="2.5" y="3" width="6" height="6" fill="#eee" stroke="none" />
        </svg>
        <Stack $l={14} $r={9} $align="flex-end">
          <Fit w={25}>10.14</Fit>
          <Fit w={57}>18/01/2022</Fit>
        </Stack>
        <svg width="14" height="14" fill="none" stroke="#ddd" strokeWidth="1.2">
          <path d="M6 1C14 1 14 11 7.5 13C5 13.6 2.5 13 1 11C7 11 8 6 6 1z" />
        </svg>
      </InnerTray>
      <NameTag>
        <Fit w={49}>Widya</Fit>
      </NameTag>
    </InnerTaskbar>
  );
}

function Participants() {
  return (
    <Side>
      <People>
        {people.map((p) => (
          <Person key={p.id} $wide={p.wide}>
            <Avatar $bg={p.bg} $fg={p.fg}>
              {p.id}
            </Avatar>
            <PersonName $shift={p.shift}>
              <Fit w={p.w}>{p.name}</Fit>
              {p.muted && <MicOff s={18} />}
            </PersonName>
          </Person>
        ))}
      </People>
      <SelfView>
        <Avatar $d={84} $size={31} $lift={1} $bg="#cfe0d6" $fg="#14432f">
          N
        </Avatar>
      </SelfView>
    </Side>
  );
}

function SystemTaskbar() {
  return (
    <Taskbar>
      <Apps>
        {apps.map(([icon, state], i) => (
          <TaskButton key={i} $state={state}>
            {icon}
            <AppDot $state={state} />
          </TaskButton>
        ))}
      </Apps>
      <Tray>
        <svg width="18" height="11" fill="none" stroke="#111" strokeWidth="1.3">
          <path d="M1 10L9 1L17 10" />
        </svg>
        <Space $w={15} />
        <svg width="24" height="16" viewBox="0 0 24 16" stroke="#111" strokeWidth="1.3">
          <path d="M5.5 15C0 15 -.5 8 4.5 7C5.5 0 15 -1.5 17.5 4.5C23.5 5 24.5 15 18.5 15z" fill="#eee" />
          <path d="M4.5 7C7 6 10 7 12 9L20 14.5C24 12 22.5 5 17.5 4.5C14 -1.5 5.5 0 4.5 7z" fill="#a5a5a5" stroke="none" />
          <path d="M5.5 15C0 15 -.5 8 4.5 7C5.5 0 15 -1.5 17.5 4.5C23.5 5 24.5 15 18.5 15z" fill="none" />
        </svg>
        <Space $w={16} />
        <svg width="15" height="25" viewBox="0 0 15 25">
          <rect x="2" y="0" width="11" height="18.5" rx="1" fill="#000" />
          <path d="M.7 13V19.5Q.7 20.5 2 20.5H13Q14.3 20.5 14.3 19.5V13M7.5 20.5V24M3.5 24H11.5" fill="none" stroke="#000" strokeWidth="1.2" />
        </svg>
        <Space $w={17} />
        <svg width="25" height="25" fill="none" stroke="#111" strokeWidth="1.4">
          <path d="M1 10C2 4 7 1 12 1C17 1 20.5 4 22 8M22.5 1V8.5H15.5M8 17H1V24M1.5 17.5C4 21.5 7.5 24 12 24" />
          <circle cx="18" cy="18.5" r="6" fill="#ff9a0a" stroke="none" />
        </svg>
        <Space $w={12} />
        <svg width="24" height="14">
          <rect x=".6" y=".8" width="20.5" height="12.4" fill="none" stroke="#111" strokeWidth="1.3" />
          <rect x="2.5" y="2.8" width="13.5" height="8.4" fill="#000" />
          <path d="M22.5 5V9" stroke="#111" strokeWidth="1.4" />
        </svg>
        <Space $w={14} />
        <svg width="20" height="19" fill="none" stroke="#111" strokeWidth="1.2">
          <path d="M1 18C1 8 8 1 19 1" stroke="#555" />
          <path d="M5.5 18C5.5 11 11 5.5 19 5.5M10 18C10 13.5 13.5 10 19 10M14 18C14 15.5 16 14 19 14" />
          <circle cx="17.3" cy="17" r="1.4" fill="#111" stroke="none" />
        </svg>
        <Space $w={14} />
        <svg width="22" height="18" fill="none" stroke="#111" strokeWidth="1.3">
          <path d="M.7 6H4.5L9 1V17L4.5 12H.7zM12 6.5Q13.7 9 12 11.5M15 4Q18 9 15 14" />
          <path d="M18 2Q22.5 9 18 16" stroke="#999" />
        </svg>
        <DateTime>
          <Fit w={42}>11:15</Fit>
          <Fit w={92}>18/01/2022</Fit>
        </DateTime>
        <Space $w={29} />
        <svg width="37" height="36" viewBox="0 0 37 36">
          <path d="M0 0H25V19H14L9.5 24V19H0z" fill="#000" />
          <path d="M5 4.5H20M5 9.5H20M5 14H14" stroke="#e6e0df" strokeWidth="1.3" />
          <circle cx="24" cy="23" r="12" fill="#cfc9c8" fillOpacity=".92" stroke="#777" />
          <Letter x="24" y="29" $size="16" $fill="#111">
            5
          </Letter>
        </svg>
        <Space $w={19} />
        <svg width="2" height="72">
          <rect width="1.5" height="72" fill="#b3acab" />
        </svg>
      </Tray>
    </Taskbar>
  );
}

export default function App() {
  return (
    <Desktop>
      <GlobalStyle />
      <TeamsWindow>
        <MeetingHeader />
        <Stage>
          <ShareFrame>
            <Word>
              <WordHeader />
              <WordDocument />
              <SharedTaskbar />
            </Word>
          </ShareFrame>
          <Participants />
        </Stage>
      </TeamsWindow>
      <SystemTaskbar />
    </Desktop>
  );
}
